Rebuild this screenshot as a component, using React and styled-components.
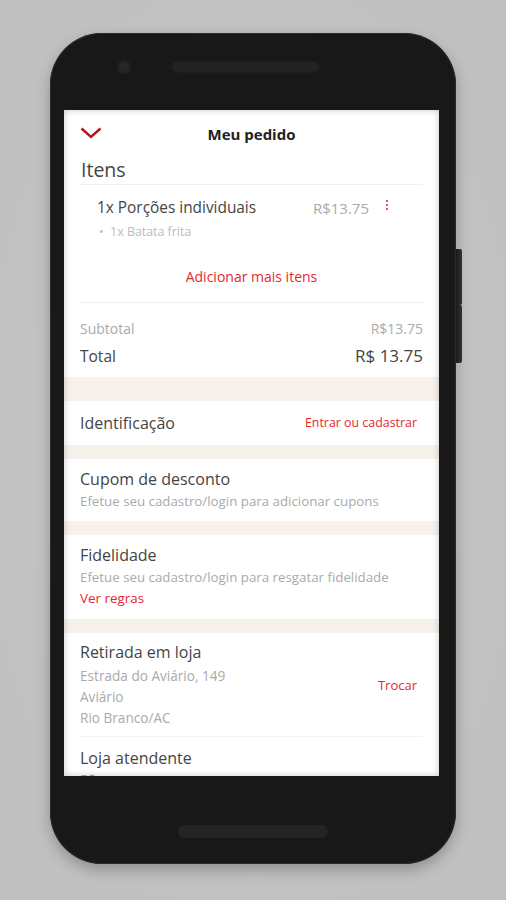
import React from "react";
import styled, { createGlobalStyle } from "styled-components";

const GlobalStyle = createGlobalStyle`
  html, body {
    margin: 0;
    padding: 0;
    background: #c3c3c3;
  }
  body {
    font-family: "Open Sans", Lato, sans-serif;
  }
`;

const Page = styled.div`
  width: 506px;
  height: 900px;
  background: radial-gradient(ellipse at center, #c6c6c6 0%, #bfbfbf 100%);
  display: flex;
  justify-content: center;
  padding-top: 33px;
  box-sizing: border-box;
`;

const Phone = styled.div`
  position: relative;
  width: 406px;
  height: 831px;
  background: #181818;
  border-radius: 52px;
  box-shadow: 0 0 0 1px #2a2a2a inset, 0 6px 14px rgba(0, 0, 0, 0.25);
  display: flex;
  flex-direction: column;
`;

const SideButton = styled.div`
  position: absolute;
  right: -6px;
  top: ${(p) => p.$top}px;
  width: 6px;
  height: ${(p) => p.$h}px;
  background: linear-gradient(90deg, #1a1a1a, #333);
  border-radius: 0 2px 2px 0;
`;

const TopBezel = styled.div`
  height: 77px;
  display: flex;
  align-items: center;
  padding: 0 0 10px 67px;
  box-sizing: border-box;
  gap: 40px;
`;

const Camera = styled.div`
  width: 14px;
  height: 14px;
  border-radius: 50%;
  background: #262626;
  box-shadow: inset 0 0 0 2px #202020;
`;

const Speaker = styled.div`
  width: 149px;
  height: 12px;
  border-radius: 6px;
  background: #232323;
  box-shadow: inset 0 0 2px rgba(0, 0, 0, 0.6);
`;

const Screen = styled.div`
  position: relative;
  margin-left: 14px;
  width: 375px;
  height: 666px;
  background: #fff;
  overflow: hidden;
  &::after {
    content: "";
    position: absolute;
    inset: 0;
    box-shadow: inset 0 0 7px rgba(0, 0, 0, 0.22);
    pointer-events: none;
  }
`;

const BottomBezel = styled.div`
  flex: 1;
  display: flex;
  justify-content: center;
  padding-top: 49px;
  box-sizing: border-box;
`;

const HomeBar = styled.div`
  width: 150px;
  height: 13px;
  border-radius: 7px;
  background: #242424;
`;

const Header = styled.div`
  position: relative;
  height: 48px;
  display: flex;
  align-items: center;
  justify-content: center;
  font-size: 15px;
  font-weight: 700;
  color: #222;
`;

const BackIcon = styled.svg`
  position: absolute;
  left: 16px;
  top: 17px;
`;

const Section = styled.div`
  padding: ${(p) => p.$pad || "0 16px"};
  background: #fff;
`;

const Band = styled.div`
  height: ${(p) => p.$h}px;
  background: #f7f1ec;
`;

const Spacer = styled.div`
  height: ${(p) => p.$h}px;
`;

const ItensTitle = styled.div`
  font-size: 19.5px;
  line-height: 26px;
  color: #444;
  padding-left: 1px;
  margin-top: -1px;
  border-bottom: 1px solid #efefef;
  padding-bottom: 1px;
`;

const ItemRow = styled.div`
  display: flex;
  align-items: center;
  padding: 13px 0 0 17px;
  font-size: 15.4px;
  line-height: 20px;
  color: #444;
`;

const ItemName = styled.span`
  flex: 1;
`;

const ItemPrice = styled.span`
  color: #aaa;
  font-size: 15px;
`;

const Kebab = styled.span`
  display: flex;
  flex-direction: column;
  gap: 2px;
  width: 2px;
  margin: 0 35px 6px 17px;
  i {
    display: block;
    width: 2px;
    height: 2px;
    border-radius: 1px;
    background: #d3202a;
  }
`;

const SubItem = styled.div`
  margin-top: 6px;
  padding-left: 19px;
  font-size: 12.4px;
  line-height: 16px;
  color: #bbb;
`;

const AddMore = styled.div`
  margin-top: 27px;
  padding-bottom: 15px;
  text-align: center;
  font-size: 14px;
  line-height: 20px;
  color: #e8262f;
  border-bottom: 1px solid #efefef;
`;

const SumRow = styled.div`
  display: flex;
  justify-content: space-between;
  align-items: center;
  margin-top: ${(p) => p.$mt}px;
  font-size: ${(p) => p.$fs}px;
  line-height: ${(p) => p.$lh}px;
  color: ${(p) => (p.$muted ? "#aaa" : "#444")};
  span:last-child {
    font-size: ${(p) => p.$vfs || p.$fs}px;
  }
`;

const InlineRow = styled.div`
  height: 44px;
  display: flex;
  align-items: center;
  justify-content: space-between;
  padding-right: 6px;
`;

const Title = styled.div`
  font-size: 16px;
  line-height: 20px;
  color: #444;
`;

const Muted = styled.div`
  margin-top: ${(p) => p.$mt || 0}px;
  font-size: ${(p) => p.$fs || 13.3}px;
  line-height: ${(p) => p.$lh || 18}px;
  color: #aaa;
`;

const RedLink = styled.div`
  margin-top: ${(p) => p.$mt || 0}px;
  font-size: ${(p) => p.$fs || 13}px;
  line-height: 18px;
  color: #e8262f;
`;

const StoreRow = styled.div`
  display: flex;
  align-items: center;
  justify-content: space-between;
  padding: 9px 6px 8px 0;
  border-bottom: 1px solid #f2f2f2;
`;

export default function App() {
  return (
    <>
      <GlobalStyle />
      <Page>
        <Phone>
          <SideButton $top={216} $h={56} />
          <SideButton $top={272} $h={58} />
          <TopBezel>
            <Camera />
            <Speaker />
          </TopBezel>
          <Screen>
            <Header>
              <BackIcon width="22" height="12" viewBox="0 0 22 12">
                <path d="M1.5 1.5 L11 10 L20.5 1.5" fill="none" stroke="#b5121b" strokeWidth="2.4" />
              </BackIcon>
              Meu pedido
            </Header>

            <Section>
              <ItensTitle>Itens</ItensTitle>
              <ItemRow>
                <ItemName>1x Porções individuais</ItemName>
                <ItemPrice>R$13.75</ItemPrice>
                <Kebab>
                  <i />
                  <i />
                  <i />
                </Kebab>
              </ItemRow>
              <SubItem>•&nbsp;&nbsp;1x Batata frita</SubItem>
              <AddMore>Adicionar mais itens</AddMore>
              <SumRow $mt={16} $fs={14} $lh={20} $muted>
                <span>Subtotal</span>
                <span>R$13.75</span>
              </SumRow>
              <SumRow $mt={6} $fs={15.5} $vfs={17} $lh={22}>
                <span>Total</span>
                <span>R$ 13.75</span>
              </SumRow>
              <Spacer $h={10} />
            </Section>

            <Band $h={24} />
            <Section>
              <InlineRow>
                <Title>Identificação</Title>
                <RedLink $fs={12.4}>Entrar ou cadastrar</RedLink>
              </InlineRow>
            </Section>

            <Band $h={14} />
            <Section $pad="10px 16px 11px">
              <Title>Cupom de desconto</Title>
              <Muted $mt={3}>Efetue seu cadastro/login para adicionar cupons</Muted>
            </Section>

            <Band $h={14} />
            <Section $pad="10px 16px 12px">
              <Title>Fidelidade</Title>
              <Muted $mt={3}>Efetue seu cadastro/login para resgatar fidelidade</Muted>
              <RedLink $mt={3} $fs={13.4}>Ver regras</RedLink>
            </Section>

            <Band $h={14} />
            <Section>
              <StoreRow>
                <div>
                  <Title>Retirada em loja</Title>
                  <Muted $mt={3} $lh={21} $fs={13.6}>
                    Estrada do Aviário, 149
                    <br />
                    Aviário
                    <br />
                    Rio Branco/AC
                  </Muted>
                </div>
                <RedLink>Trocar</RedLink>
              </StoreRow>
            </Section>
            <Section $pad="11px 16px 0">
              <Title>Loja atendente</Title>
              <Muted $mt={2}>R$ -</Muted>
            </Section>
          </Screen>
          <BottomBezel>
            <HomeBar />
          </BottomBezel>
        </Phone>
      </Page>
    </>
  );
}
